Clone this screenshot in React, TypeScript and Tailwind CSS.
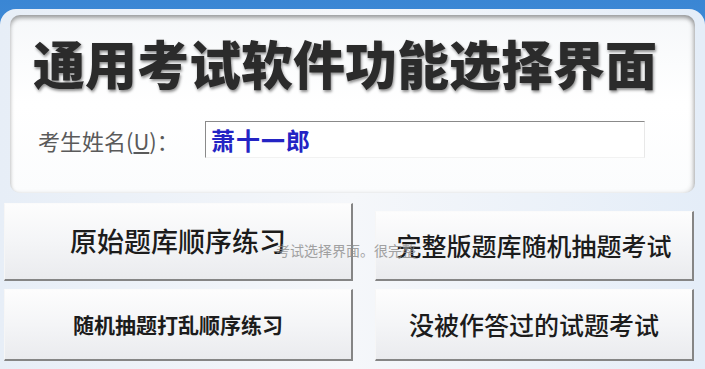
import { ReactNode } from 'react';

const serif = { fontFamily: '"Noto Sans CJK SC", "DejaVu Sans", sans-serif' };

function MenuButton({
  children,
  className,
}: {
  children: ReactNode;
  className: string;
}) {
  return (
    <button
      className={`flex items-center justify-center border-r-2 border-b-2 border-t border-l border-r-[#858585] border-b-[#858585] border-t-[#fbfbfb] border-l-[#f6f6f6] bg-gradient-to-b from-[#fdfdfd] via-[#f4f5f7] to-[#eaebee] text-[#1c1c1c] ${className}`}
      style={serif}
    >
      {children}
    </button>
  );
}

export default function App() {
  return (
    <div className="relative h-[369px] w-[705px] overflow-hidden bg-gradient-to-b from-[#3a86d4] to-[#6aa8e2] pt-[9px]">
      <div className="h-full rounded-t-[16px] bg-gradient-to-r from-[#e7eef7] via-[#f5f7fa] to-[#e4edf8] px-[4px] pt-[6px]">
        <div className="mx-[6px] h-[178px] rounded-[10px] bg-gradient-to-b from-[#f6f8fa] via-white to-[#fbfcfd] pl-[23px] pt-[22px] shadow-[inset_0_3px_4px_rgba(0,0,0,0.35),inset_-3px_0_4px_rgba(0,0,0,0.1)]">
          <h1
            className="text-[52px] font-black leading-none text-[#2b2b2b] [text-shadow:1px_2px_3px_rgba(0,0,0,0.45)]"
            style={serif}
          >
            通用考试软件功能选择界面
          </h1>
          <div className="mt-[32px] flex items-center">
            <label
              className="w-[172px] pl-[5px] text-[22px] leading-none text-[#5a5a5a]"
              style={serif}
            >
              考生姓名(<span className="underline">U</span>)：
            </label>
            <div className="flex h-[37px] w-[440px] items-center border-t border-l border-t-[#8a8a8a] border-l-[#8a8a8a] border-r border-b border-r-[#e8e8e8] border-b-[#f2f2f2] bg-white pl-[5px]">
              <span
                className="text-[24px] font-bold leading-none tracking-[1px] text-[#2424c4]"
                style={serif}
              >
                萧十一郎
              </span>
            </div>
          </div>
        </div>

        <div className="mt-[10px] grid grid-cols-[349px_319px] gap-x-[22px] gap-y-[8px]">
          <MenuButton className="h-[78px] text-[27px] font-medium">原始题库顺序练习</MenuButton>
          <MenuButton className="mt-[8px] h-[70px] text-[25px] font-medium">
            完整版题库随机抽题考试
          </MenuButton>
          <MenuButton className="h-[72px] text-[21px] font-bold">
            随机抽题打乱顺序练习
          </MenuButton>
          <MenuButton className="h-[72px] text-[25px] font-medium">没被作答过的试题考试</MenuButton>
        </div>
      </div>

      <div
        className="pointer-events-none absolute left-[276px] top-[243px] text-[14px] leading-none text-[#8c8c8c] opacity-80"
        style={serif}
      >
        考试选择界面。很完整
      </div>
    </div>
  );
}
